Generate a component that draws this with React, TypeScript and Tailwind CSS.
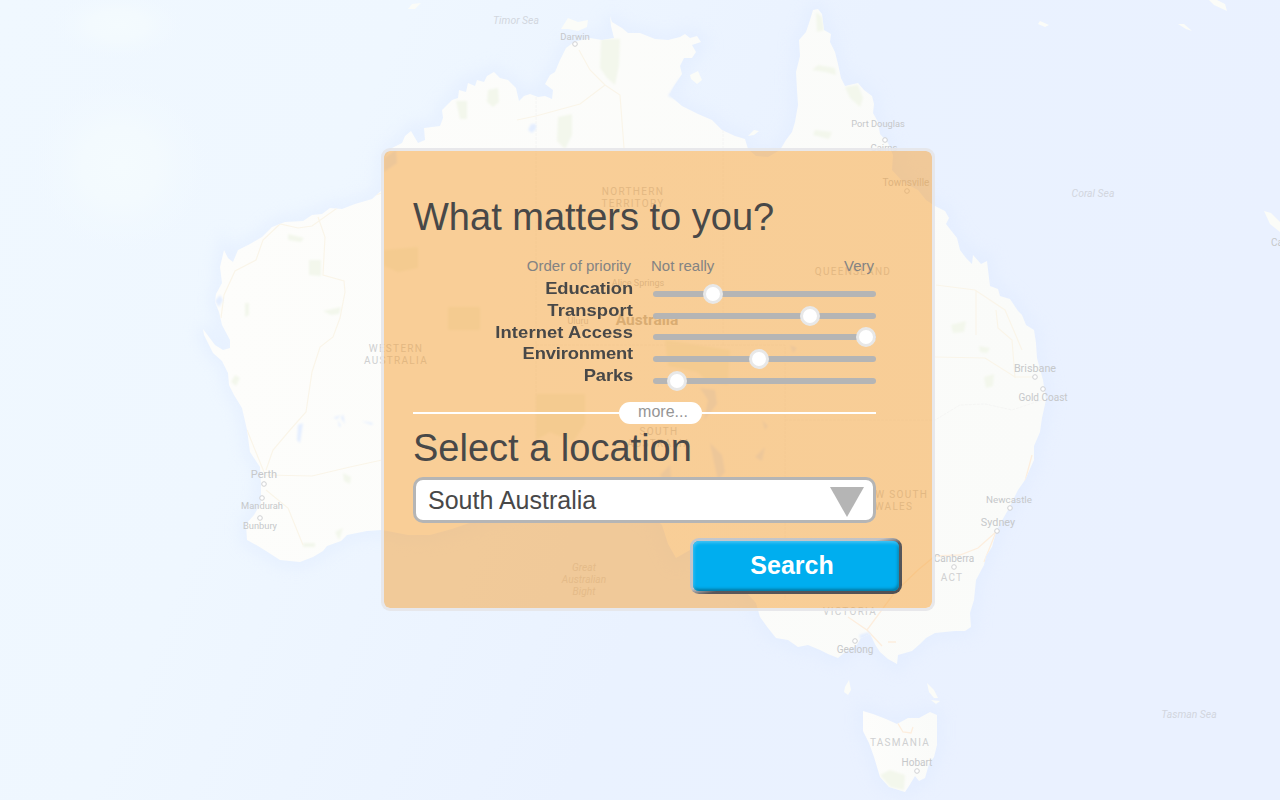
import React from "react";

const MAINLAND =
  "M382 190 384 158 392 148 402 143 405 136 411 131 418 143 425 140 424 128 440 126 443 118 442 110 452 100 458 98 459 90 466 92 468 83 475 86 477 80 484 82 487 76 494 72 500 78 508 80 516 88 519 101 524 96 530 94 538 97 545 96 552 99 553 90 545 84 550 75 555 72 560 60 566 48 574 42 590 38 602 40 614 38 611 26 610 16 612 22 622 28 628 33 640 33 655 39 668 40 680 37 685 34 690 38 697 36 701 42 692 45 696 52 692 58 684 58 680 66 682 74 674 86 669 95 682 106 698 114 712 120 722 130 735 136 745 139 748 149 756 156 768 157 780 150 786 140 792 132 795 122 798 105 797 90 796 72 800 56 799 40 806 32 810 20 813 10 818 9 822 14 824 30 831 34 830 42 835 52 838 64 841 78 845 86 858 83 864 90 872 96 874 104 873 113 878 122 880 134 888 143 893 155 892 170 903 182 918 190 926 200 935 206 945 211 949 218 946 224 957 238 960 250 966 258 972 264 973 255 981 264 987 261 989 278 990 286 998 289 1000 296 1010 299 1018 311 1022 315 1026 325 1034 330 1036 343 1037 358 1043 380 1046 400 1042 418 1040 432 1034 446 1034 460 1025 480 1018 490 1008 510 1000 524 996 532 992 547 986 556 984 565 976 580 974 600 970 613 971 627 965 631 955 631 935 633 926 638 920 644 912 651 898 655 897 664 888 659 880 652 876 646 870 634 861 638 856 646 845 652 838 658 828 654 820 650 808 645 798 647 788 640 776 638 768 628 760 617 756 603 742 588 736 570 726 560 716 547 706 552 690 550 676 558 668 544 662 525 650 514 636 507 618 500 590 493 565 496 540 503 516 508 494 514 472 522 452 529 430 535 408 535 382 530 367 531 347 535 341 541 327 546 323 551 313 557 300 562 280 560 266 551 258 546 247 540 246 524 254 515 261 503 261 484 260 467 250 452 247 430 242 408 234 395 229 385 228 373 222 361 213 353 204 335 203 329 215 345 223 350 230 348 230 340 222 325 219 312 215 302 216 294 222 283 220 267 224 250 228 258 233 262 238 250 250 244 262 237 272 227 285 222 303 221 312 215 322 214 330 208 342 209 355 204 372 199Z";

const TASMANIA =
  "M863 711 873 714 886 719 897 724 908 718 919 718 930 712 937 715 937 745 934 757 929 764 925 778 919 781 915 776 909 786 905 792 889 787 880 777 874 757 869 743 863 731Z";

const ISLANDS = [
  "M561 29 568 18 578 22 588 20 587 27 578 31 568 29Z",
  "M690 75 698 71 702 80 697 84 691 79Z",
  "M748 136 754 130 759 131 754 135Z",
  "M845 687 849 680 851 690 848 695 844 692Z",
  "M927 683 934 690 938 698 934 698 929 692Z",
  "M931 700 940 701 936 704Z",
  "M1209 0 1217 0 1225 4 1227 11 1214 5Z",
  "M1178 24 1184 24 1192 31 1186 29Z",
  "M1040 21 1049 25 1045 27 1038 24Z",
  "M1264 211 1271 213 1280 222 1280 232 1270 224Z",
  "M408 9 412 4 421 3 415 9Z",
];

const PARKS =
  "M601 39H620L619 65 615 85 607 78 600 68ZM488 90 498 88 499 102 493 107 487 102ZM456 101H467V119H460ZM558 117 572 114V135L565 149 557 141ZM596 17 605 16 611 24 600 23ZM816 12 822 17 824 30 817 32ZM818 65 835 68 836 75 825 72 812 70ZM845 87 858 85 863 98 860 107 850 98ZM815 130 832 132 829 139 813 135ZM288 234 304 238 301 242 288 240ZM309 260H321V276L309 275ZM245 303H249V315L245 317ZM323 311 341 307 339 314 331 315ZM448 307H480V330H448ZM384 250 418 247V268L398 272 384 266ZM536 394H585V424L573 442 550 432 536 440ZM665 340 730 350 728 385 708 382 697 372 668 366ZM880 775 890 770 905 775 904 790 890 787ZM951 325 966 321 964 332 953 333ZM979 346 990 348 987 353 980 352ZM984 377 994 374 993 386 986 388ZM335 532 343 528 339 540ZM303 543H315V547H303ZM343 473 351 477 350 484 344 481ZM235 375 240 378 236 386 231 382Z";

const ROADS =
  "M382 193 340 206 312 226 298 228 280 224 263 240 256 260 235 271 224 295 221 318M318 217 325 237 323 275 344 281 345 292 340 318 333 337 320 347 312 372 306 412 290 430 273 450 266 470M266 475 312 476 350 467 382 460M266 490 288 508 303 545M247 430 264 472M517 120 536 116 580 104 605 85 620 95 624 148M605 85 590 70 579 50M936 285 975 290 1005 310 1022 350M976 290V335M935 357 985 358 1015 377 1037 377M1015 378 1012 340 998 328 996 310";
const ORANGE_ROADS =
  "M1032 455 1020 500 997 531 978 548 960 555 935 556 918 570 895 592 867 630 848 617M996 532 984 562M867 630 882 646M888 642H896M886 718 897 722 903 732 911 733 913 727";
const LAKES =
  "M531 124H536V129L532 133 528 130ZM668 96 680 78 684 90 682 102ZM215 301 220 295 223 300 219 307ZM298 425 303 423 300 443 297 440ZM333 418 341 415 337 419ZM338 420 341 426 339 427ZM343 414 345 424 341 418ZM361 421 373 423 372 425ZM700 388 715 390 717 404 704 420 708 400ZM710 443 722 455 725 472 718 480 714 462ZM755 457 765 447 762 461ZM384 158 396 150 397 163 384 172ZM790 345 797 348 793 353ZM660 475 670 465 672 490ZM859 635 869 632 872 642 863 645ZM762 420 768 426 765 430Z";

const BORDERS =
  "M536 97V440M723 130V345M723 345H785V600M536 345H723M785 420H935L960 405 985 404 1012 410 1042 400";

type MapLabel = { x: number; y: number; text: string; size?: number; kind?: "sea" | "state" | "city" | "country" };

const LABELS: MapLabel[] = [
  { x: 516, y: 24, text: "Timor Sea", kind: "sea", size: 10.4 },
  { x: 575, y: 40, text: "Darwin", size: 9.5 },
  { x: 878, y: 127, text: "Port Douglas", size: 9.3 },
  { x: 884, y: 151, text: "Cairns", size: 9.5 },
  { x: 906, y: 186, text: "Townsville", size: 10 },
  { x: 1093, y: 197, text: "Coral Sea", kind: "sea", size: 10.4 },
  { x: 1189, y: 718, text: "Tasman Sea", kind: "sea", size: 10.4 },
  { x: 633, y: 195, text: "NORTHERN", kind: "state" },
  { x: 633, y: 207, text: "TERRITORY", kind: "state" },
  { x: 853, y: 275, text: "QUEENSLAND", kind: "state" },
  { x: 396, y: 352, text: "WESTERN", kind: "state" },
  { x: 396, y: 364, text: "AUSTRALIA", kind: "state" },
  { x: 659, y: 435, text: "SOUTH", kind: "state" },
  { x: 659, y: 447, text: "AUSTRALIA", kind: "state" },
  { x: 894, y: 498, text: "NEW SOUTH", kind: "state" },
  { x: 894, y: 510, text: "WALES", kind: "state" },
  { x: 850, y: 615, text: "VICTORIA", kind: "state" },
  { x: 952, y: 581, text: "ACT", kind: "state" },
  { x: 900, y: 746, text: "TASMANIA", kind: "state" },
  { x: 647, y: 325, text: "Australia", kind: "country" },
  { x: 638, y: 286, text: "Alice Springs", size: 9 },
  { x: 578, y: 324, text: "Uluṟu", size: 9 },
  { x: 264, y: 478, text: "Perth", size: 11 },
  { x: 262, y: 509, text: "Mandurah", size: 9.3 },
  { x: 260, y: 529, text: "Bunbury", size: 9.3 },
  { x: 1035, y: 372, text: "Brisbane", size: 10.8 },
  { x: 1043, y: 401, text: "Gold Coast", size: 10 },
  { x: 1009, y: 503, text: "Newcastle", size: 9.8 },
  { x: 998, y: 526, text: "Sydney", size: 10.8 },
  { x: 954, y: 562, text: "Canberra", size: 10 },
  { x: 855, y: 653, text: "Geelong", size: 10 },
  { x: 917, y: 766, text: "Hobart", size: 10 },
  { x: 584, y: 571, text: "Great", kind: "sea", size: 10.2 },
  { x: 584, y: 583, text: "Australian", kind: "sea", size: 10.2 },
  { x: 584, y: 595, text: "Bight", kind: "sea", size: 10.2 },
  { x: 1277, y: 246, text: "Ca", size: 10 },
];

const CITIES: [number, number][] = [
  [575, 44], [885, 140], [907, 191], [264, 484], [262, 498], [260, 518],
  [1035, 377], [1043, 389], [1010, 508], [997, 531], [954, 567], [855, 641], [917, 771],
];

const LABEL_STYLES = {
  sea: "fill-[#d2d6de] italic",
  state: "fill-[#cfd0d1] tracking-[1.3px]",
  city: "fill-[#c6c8ca]",
  country: "fill-[#bcb8b0] font-bold",
};

function MapBackground() {
  return (
    <svg className="absolute inset-0 h-[800px] w-[1280px] font-[Roboto,sans-serif]" viewBox="0 0 1280 800" aria-hidden="true">
      <defs>
        <linearGradient id="sea" x1="0" y1="0" x2="1" y2="0.25">
          <stop offset="0" stopColor="#f0f8ff" />
          <stop offset="0.3" stopColor="#eff7ff" />
          <stop offset="0.65" stopColor="#eaf2ff" />
          <stop offset="1" stopColor="#eaf1ff" />
        </linearGradient>
        <radialGradient id="glow">
          <stop offset="0" stopColor="#f4fbfe" />
          <stop offset="0.4" stopColor="#f3fafe" />
          <stop offset="1" stopColor="#f0f8ff" stopOpacity="0" />
        </radialGradient>
        <linearGradient id="land" x1="0" y1="0" x2="1" y2="0">
          <stop offset="0" stopColor="#fdfdfb" />
          <stop offset="1" stopColor="#fafbf9" />
        </linearGradient>
        <filter id="shelf" x="-10%" y="-10%" width="120%" height="120%">
          <feGaussianBlur stdDeviation="7" />
        </filter>
        <filter id="soften">
          <feGaussianBlur stdDeviation="0.8" />
        </filter>
        <clipPath id="landmask">
          <path d={MAINLAND} />
          <path d={TASMANIA} />
        </clipPath>
      </defs>
      <rect width="1280" height="800" fill="url(#sea)" />
      <circle cx="120" cy="165" r="95" fill="url(#glow)" />
      <ellipse cx="118" cy="25" rx="70" ry="36" fill="url(#glow)" />
      <g filter="url(#shelf)" fill="none" stroke="#e0ebff" strokeWidth="14" opacity="0.5">
        <path d={MAINLAND} />
        <path d={TASMANIA} />
      </g>
      <g fill="url(#land)">
        <path d={MAINLAND} />
        <path d={TASMANIA} />
      </g>
      {ISLANDS.map((d) => (
        <path key={d} d={d} fill="#fbfcf8" />
      ))}
      <g clipPath="url(#landmask)">
        <path d={PARKS} fill="#f3f7ec" filter="url(#soften)" />
        <path d={ROADS} fill="none" stroke="#faf5e9" strokeWidth="1.2" />
        <path d={ORANGE_ROADS} fill="none" stroke="#fdeede" strokeWidth="1.3" />
        <path d={BORDERS} fill="none" stroke="#f4f4f2" strokeWidth="0.8" strokeDasharray="3 1" />
        <path d={LAKES} fill="#e4eeff" filter="url(#soften)" />
      </g>
      {CITIES.map(([x, y]) => (
        <circle key={`${x}-${y}`} cx={x} cy={y} r="2.3" fill="#fff" stroke="#d0d1d3" />
      ))}
      {LABELS.map(({ x, y, text, size, kind = "city" }) => (
        <text
          key={`${text}-${y}`}
          x={x}
          y={y}
          textAnchor="middle"
          fontSize={size ?? (kind === "country" ? 15.5 : 10)}
          className={LABEL_STYLES[kind]}
        >
          {text}
        </text>
      ))}
    </svg>
  );
}

const PRIORITIES = [
  { name: "Education", value: 60, tracking: "tracking-[-0.1px]" },
  { name: "Transport", value: 157, tracking: "tracking-[0.1px]" },
  { name: "Internet Access", value: 213, tracking: "tracking-[0.1px]" },
  { name: "Environment", value: 106, tracking: "tracking-[-0.15px]" },
  { name: "Parks", value: 24, tracking: "tracking-[-0.15px]" },
];

export default function App() {
  return (
    <main className="relative flex h-[800px] w-[1280px] items-start overflow-hidden bg-[#edf4ff] font-['Liberation_Sans',Arial,sans-serif] text-[#484848]">
      <MapBackground />
      <section className="relative mt-[148px] ml-[381px] flex h-[463px] w-[554px] flex-col rounded-[9px] border-[3px] border-[#e5e6e9]/90 bg-[#f5a034]/50 bg-clip-padding pl-[29px]">
        <h1 className="mt-[44px] h-[44px] text-[38px] leading-[44px] whitespace-nowrap">What matters to you?</h1>
        <div className="mt-[18px] flex h-[18px] text-[15px] leading-[18px] text-[#838383]">
          <span className="w-[218px] text-right">Order of priority</span>
          <span className="ml-[20px]">Not really</span>
          <span className="mr-[58px] ml-auto">Very</span>
        </div>
        <div className="mt-[8px] flex flex-col">
          {PRIORITIES.map(({ name, value, tracking }) => (
            <div key={name} className="flex h-[21.75px] items-center">
              <span className={`-mt-[9.5px] w-[220px] origin-right scale-x-[1.08] text-right text-[17px] leading-[20px] font-bold whitespace-nowrap ${tracking}`}>{name}</span>
              <div className="relative ml-[20px] h-[6px] w-[223px] rounded-full bg-[#b5b5b5]">
                <span
                  className="absolute -top-[7px] size-[20px] -translate-x-1/2 rounded-full border-[3px] border-[#e8e8e8] bg-white"
                  style={{ left: value }}
                />
              </div>
            </div>
          ))}
        </div>
        <div className="mt-[10px] flex w-[463px] items-center">
          <span className="h-[2px] w-[206px] bg-white" />
          <button className="h-[22px] w-[83px] rounded-full bg-white pb-[3px] pl-[5px] text-[16px] leading-[19px] text-[#959595]">more...</button>
          <span className="h-[2px] flex-1 bg-white" />
        </div>
        <h2 className="mt-[2px] h-[44px] text-[38px] leading-[44px] whitespace-nowrap">Select a location</h2>
        <button className="mt-[7px] flex h-[46px] w-[463px] items-center justify-between rounded-[10px] border-[3px] border-[#b5b5b5] bg-white pr-[9px] pl-[12px] text-left text-[25px] leading-[28px]">
          South Australia
          <svg className="mt-[5px] h-[30px] w-[34px]" viewBox="0 0 34 30">
            <path d="M0 0H34L17 30Z" fill="#b5b5b5" />
          </svg>
        </button>
        <button className="mt-[15px] ml-[277px] h-[56px] w-[212px] rounded-[9px] border-[3px] border-transparent [background:linear-gradient(#00aeef,#00aeef)_padding-box,linear-gradient(to_bottom_right,#c3c8cf,#c3c3c5_46%,#58585c_54%,#505054)_border-box] pr-[8px] pb-[1px] text-[25px] font-bold text-white shadow-[inset_1px_2px_3px_#3fc2f4,inset_-1px_-2px_3px_#04779f]">
          Search
        </button>
      </section>
    </main>
  );
}
